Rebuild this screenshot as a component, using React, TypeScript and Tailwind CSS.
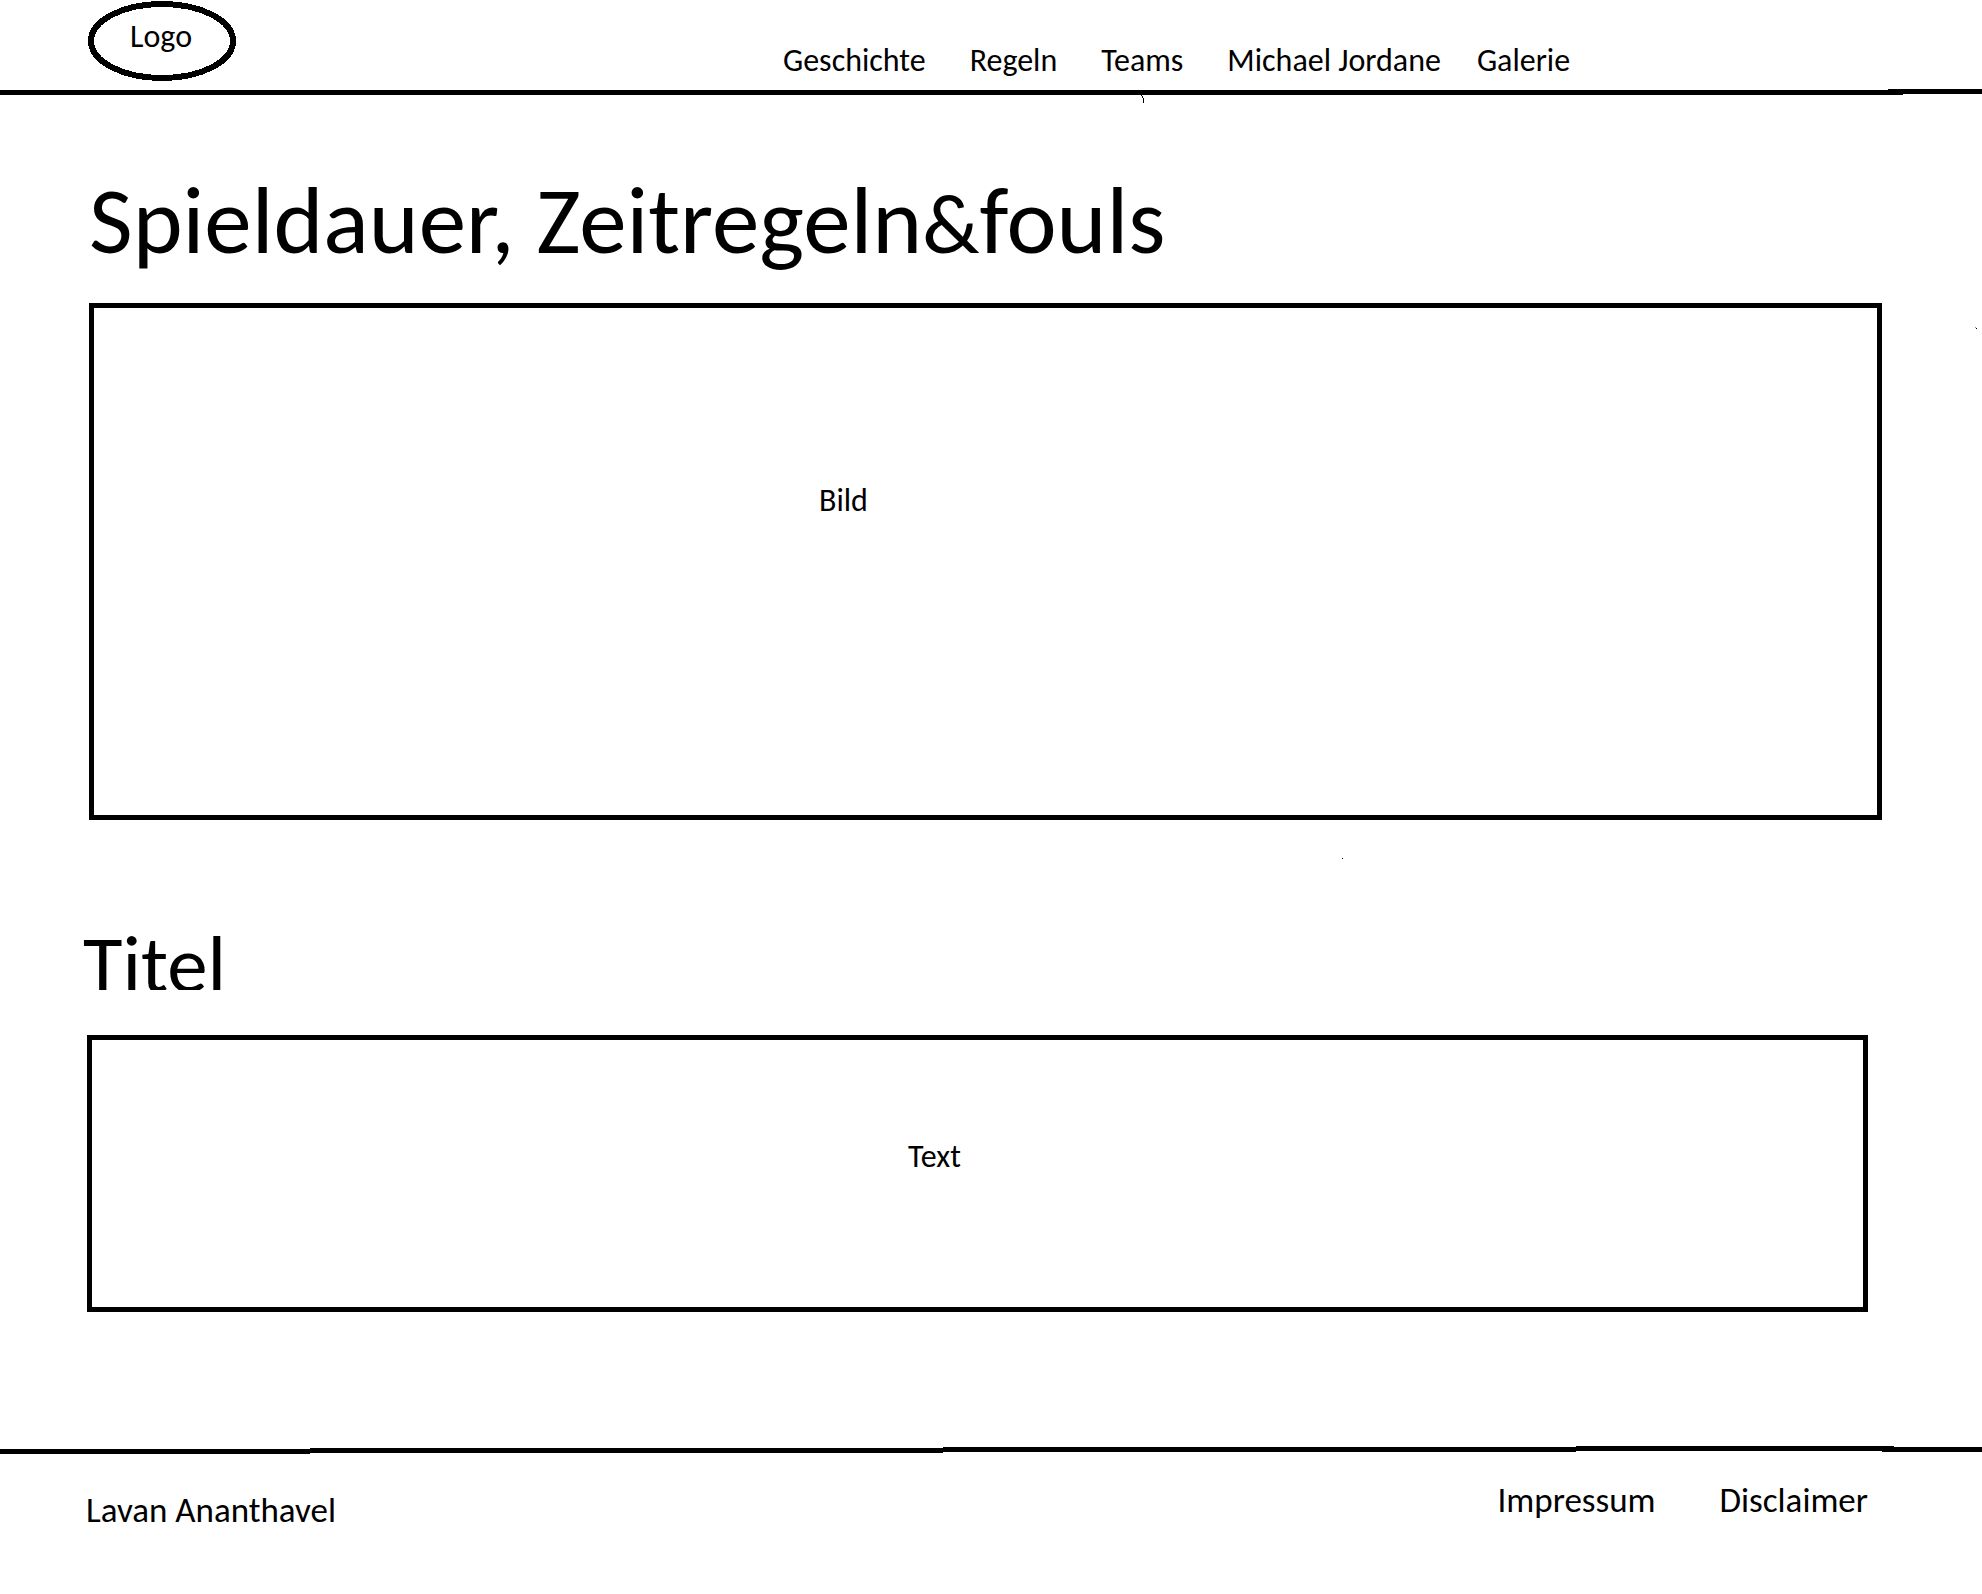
type Point = [number, number];

/** A rule drawn by hand: each run is [start, end] with its own height. */
function DrawnRule({ runs }: { runs: { span: Point; y: number }[] }) {
  return (
    <svg
      className="block h-2 w-full"
      viewBox="0 0 1982 8"
      preserveAspectRatio="none"
      shapeRendering="crispEdges"
      aria-hidden="true"
    >
      {runs.map(({ span: [from, to], y }) => (
        <rect key={from} x={from} y={y} width={to - from} height="5" />
      ))}
    </svg>
  );
}

function Logo() {
  return (
    <a href="#" className="relative mt-px ml-[88px] flex h-20 w-[148px] justify-center pt-4 pr-[2px]">
      <svg
        className="absolute inset-0 size-full"
        viewBox="0 0 148 80"
        fill="none"
        stroke="#000"
        strokeWidth="6"
        shapeRendering="crispEdges"
        aria-hidden="true"
      >
        <ellipse cx="74" cy="40" rx="71" ry="37" />
      </svg>
      <span>Logo</span>
    </a>
  );
}

export default function App() {
  return (
    <div className="relative min-h-screen overflow-hidden bg-white font-[Carlito,Calibri,Lato,sans-serif] text-[32px] leading-10 text-black">
      <header>
        <div className="flex h-[89px] items-start">
          <Logo />
          <nav className="ml-[547px] flex pt-[41px] whitespace-nowrap">
            <a href="#geschichte">Geschichte</a>
            <a href="#regeln" className="ml-11">Regeln</a>
            <a href="#teams" className="ml-11">Teams</a>
            <a href="#jordane" className="ml-11">Michael Jordane</a>
            <a href="#galerie" className="ml-9">Galerie</a>
          </nav>
        </div>
        <DrawnRule runs={[{ span: [0, 1903], y: 1 }, { span: [1888, 1982], y: 0 }]} />
      </header>

      <main>
        <h1 className="pt-[76px] pl-[89px] text-[95px] leading-[96px] whitespace-nowrap">
          Spieldauer, Zeitregeln<span className="text-[84px] leading-none">&amp;</span>fouls
        </h1>
        <section className="mt-[34px] mr-[100px] ml-[89px] h-[517px] border-5 border-black pt-[173px] pl-[725px]">
          <p>Bild</p>
        </section>

        <h2 className="mt-[105px] ml-[83px] h-[65px] overflow-hidden text-[81px] leading-20">Titel</h2>
        <section className="mt-[45px] mr-[114px] ml-[87px] h-[277px] border-5 border-black pt-[97px] pl-[816px]">
          <p>Text</p>
        </section>
      </main>

      <footer className="mt-[134px]">
        <DrawnRule
          runs={[
            { span: [0, 310], y: 3 },
            { span: [310, 943], y: 2 },
            { span: [943, 1576], y: 1 },
            { span: [1576, 1894], y: 0 },
            { span: [1882, 1982], y: 1 },
          ]}
        />
        <div className="flex items-start justify-between pt-[26px] pr-[114px] pl-[86px] text-[35px]">
          <p className="pt-[10px]">Lavan Ananthavel</p>
          <nav className="flex gap-16">
            <a href="#impressum">Impressum</a>
            <a href="#disclaimer">Disclaimer</a>
          </nav>
        </div>
      </footer>

      {/* Stray pen marks on the canvas */}
      <svg className="absolute top-[95px] left-[1141px] h-2 w-[3px]" viewBox="0 0 3 8" shapeRendering="crispEdges" aria-hidden="true">
        <path d="M0 0h1v1H0zM1 1h1v2H1zM2 3h1v5H2z" />
      </svg>
      <span className="absolute top-[328px] left-[1976px] size-px bg-black shadow-[-1px_-1px_#999]" />
      <span className="absolute top-[858px] left-[1342px] size-px bg-black" />
    </div>
  );
}
